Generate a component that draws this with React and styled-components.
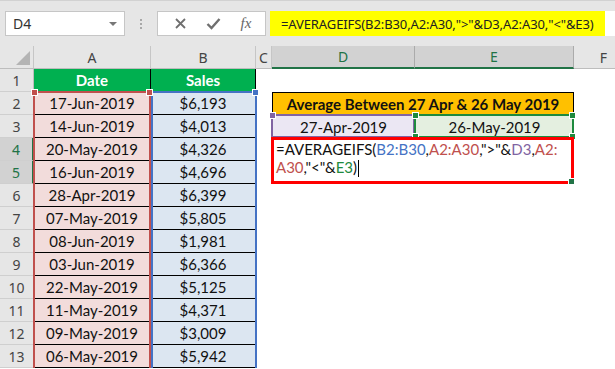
import React from 'react'
import styled, { createGlobalStyle } from 'styled-components'

const GlobalStyle = createGlobalStyle`
  html, body {
    margin: 0;
    padding: 0;
    background: #ffffff;
    overflow: hidden;
  }
`

const REF = {
  blue: '#4472c4',
  red: '#c0504d',
  purple: '#8064a2',
  green: '#1e8a3e',
}

const rows = [
  ['17-Jun-2019', '$6,193'],
  ['14-Jun-2019', '$4,013'],
  ['20-May-2019', '$4,326'],
  ['16-Jun-2019', '$4,696'],
  ['28-Apr-2019', '$6,399'],
  ['07-May-2019', '$5,805'],
  ['08-Jun-2019', '$1,981'],
  ['03-Jun-2019', '$6,366'],
  ['22-May-2019', '$5,125'],
  ['11-May-2019', '$4,371'],
  ['09-May-2019', '$3,009'],
  ['06-May-2019', '$5,942'],
]

const Page = styled.div`
  width: 615px;
  height: 369px;
  background: #fff;
  display: flex;
  flex-direction: column;
  overflow: hidden;
`

const Toolbar = styled.div`
  height: 46px;
  flex-shrink: 0;
  box-sizing: border-box;
  background: #e6e6e6;
  border-top: 1px solid #d2d2d2;
  display: flex;
  align-items: center;
  padding: 0 0 0 5px;
  font-family: 'Noto Sans', 'Open Sans', sans-serif;
`

const NameBox = styled.div`
  width: 120px;
  height: 25px;
  box-sizing: border-box;
  background: #fff;
  border: 1px solid #c6c6c6;
  display: flex;
  align-items: center;
  justify-content: space-between;
  padding: 0 7px 0 7px;
  font-size: 14px;
  color: #333;
`

const Caret = styled.span`
  width: 0;
  height: 0;
  border-left: 4px solid transparent;
  border-right: 4px solid transparent;
  border-top: 4px solid #777;
`

const Dots = styled.div`
  width: 32px;
  display: flex;
  flex-direction: column;
  align-items: center;
  gap: 2px;

  span {
    width: 2px;
    height: 2px;
    background: #a8a8a8;
  }
`

const FxButtons = styled.div`
  width: 109px;
  height: 25px;
  box-sizing: border-box;
  background: #fff;
  border: 1px solid #c6c6c6;
  display: flex;
  align-items: center;
  justify-content: space-around;
  padding: 0 4px 0 6px;
  color: #777;
`

const FxLabel = styled.span`
  font-family: 'Liberation Serif', serif;
  font-style: italic;
  font-size: 15px;
  color: #666;
`

const FormulaBox = styled.div`
  flex: 1;
  margin-left: 4px;
  height: 25px;
  box-sizing: border-box;
  background: #fff;
  display: flex;
  align-items: stretch;
`

const FormulaHighlight = styled.div`
  width: 335px;
  background: #ffff00;
  display: flex;
  align-items: center;
  padding-left: 11px;
  box-sizing: border-box;
  font-size: 13px;
  letter-spacing: -0.1px;
  color: #222;
  white-space: nowrap;
  overflow: hidden;
`

const Sheet = styled.div`
  position: relative;
  display: grid;
  grid-template-columns: 34px 117px 105px 16px 143px 159px 60px;
  grid-template-rows: repeat(14, 23px);
  font-family: Lato, 'Liberation Sans', sans-serif;
`

const ColHead = styled.div`
  background: ${p => (p.$sel ? '#d2d2d2' : '#e6e6e6')};
  color: ${p => (p.$sel ? '#217346' : '#444')};
  border-right: 1px solid ${p => (p.$sel ? '#ababab' : '#c6c6c6')};
  border-bottom: ${p => (p.$sel ? '2px solid #217346' : '1px solid #bdbdbd')};
  box-sizing: border-box;
  display: flex;
  align-items: center;
  justify-content: center;
  font-family: 'Noto Sans', 'Open Sans', sans-serif;
  font-size: 14px;
`

const Corner = styled(ColHead)`
  position: relative;
  &::after {
    content: '';
    position: absolute;
    right: 3px;
    bottom: 3px;
    width: 0;
    height: 0;
    border-left: 14px solid transparent;
    border-bottom: 14px solid #b4b4b4;
  }
`

const RowHead = styled.div`
  background: ${p => (p.$sel ? '#d2d2d2' : '#e6e6e6')};
  color: ${p => (p.$sel ? '#217346' : '#444')};
  border-bottom: 1px solid #cfcfcf;
  border-right: ${p => (p.$sel ? '2px solid #217346' : '1px solid #bdbdbd')};
  box-sizing: border-box;
  display: flex;
  align-items: center;
  justify-content: center;
  font-family: 'Noto Sans', 'Open Sans', sans-serif;
  font-size: 14px;
`

const Cell = styled.div`
  background: ${p => p.$bg || '#fff'};
  color: ${p => p.$color || '#111'};
  font-weight: ${p => (p.$bold ? 700 : 400)};
  border-right: ${p => (p.$lined ? '1px solid #000' : 'none')};
  border-bottom: ${p => (p.$lined ? '1px solid #000' : 'none')};
  border-left: ${p => (p.$boxed ? '1px solid #000' : 'none')};
  border-top: ${p => (p.$boxed ? '1px solid #000' : 'none')};
  box-sizing: border-box;
  display: flex;
  align-items: center;
  justify-content: center;
  font-size: 15px;
  white-space: nowrap;
  grid-column: ${p => p.$col || 'auto'};
`

const FormulaCell = styled.div`
  grid-column: 5 / 7;
  grid-row: 5 / 7;
  padding: 2px 0 0 4px;
  font-size: 15px;
  line-height: 18px;
  color: #111;
  white-space: nowrap;
`

const Ref = styled.span`
  color: ${p => p.$c};
`

const Cursor = styled.span`
  display: inline-block;
  width: 1px;
  height: 17px;
  background: #000;
  vertical-align: -4px;
  margin-left: 1px;
`

// overlays: reference boxes and their handles, placed by grid area
const RefBox = styled.div`
  position: absolute;
  inset: ${p => p.$inset || '0'};
  border: ${p => p.$w || 2}px solid ${p => p.$c};
  border-bottom-width: ${p => (p.$open ? 0 : p.$w || 2)}px;
  pointer-events: none;
  grid-column: ${p => p.$col};
  grid-row: ${p => p.$row};
`

const Handle = styled.span`
  position: absolute;
  width: 5px;
  height: 5px;
  background: ${p => p.$c};
  border: 1px solid #fff;
  ${p => (p.$left ? 'left: -4px;' : 'right: -4px;')}
  ${p => (p.$top ? 'top: -4px;' : 'bottom: -4px;')}
`

function XIcon() {
  return (
    <svg width="13" height="13" viewBox="0 0 13 13">
      <path d="M2 2 L11 11 M11 2 L2 11" stroke="#6f6f6f" strokeWidth="1.8" />
    </svg>
  )
}

function CheckIcon() {
  return (
    <svg width="15" height="13" viewBox="0 0 15 13">
      <path d="M1.5 7 L5.5 11 L13.5 2" stroke="#6f6f6f" strokeWidth="2.4" fill="none" />
    </svg>
  )
}

export default function App() {
  const cols = ['A', 'B', 'C', 'D', 'E', 'F']
  return (
    <Page>
      <GlobalStyle />
      <Toolbar>
        <NameBox>
          <span>D4</span>
          <Caret />
        </NameBox>
        <Dots><span /><span /><span /></Dots>
        <FxButtons>
          <XIcon />
          <CheckIcon />
          <FxLabel>fx</FxLabel>
        </FxButtons>
        <FormulaBox>
          <FormulaHighlight>=AVERAGEIFS(B2:B30,A2:A30,"&gt;"&amp;D3,A2:A30,"&lt;"&amp;E3)</FormulaHighlight>
        </FormulaBox>
      </Toolbar>

      <Sheet>
        <Corner />
        {cols.map(c => (
          <ColHead key={c} $sel={c === 'D' || c === 'E'}>{c}</ColHead>
        ))}

        {/* row 1 */}
        <RowHead>1</RowHead>
        <Cell $bg="#00b050" $color="#fff" $bold $lined>Date</Cell>
        <Cell $bg="#00b050" $color="#fff" $bold $lined>Sales</Cell>
        <Cell $col="4 / 8" />

        {rows.map(([date, sales], i) => {
          const r = i + 2
          return (
            <React.Fragment key={r}>
              <RowHead $sel={r === 4 || r === 5}>{r}</RowHead>
              <Cell $bg="#f2dcdb" $lined>{date}</Cell>
              <Cell $bg="#dce6f1" $lined>{sales}</Cell>
              {r === 2 && (
                <>
                  <Cell />
                  <Cell $col="5 / 7" $bg="#ffc000" $bold $lined $boxed>Average Between 27 Apr &amp; 26 May 2019</Cell>
                  <Cell />
                </>
              )}
              {r === 3 && (
                <>
                  <Cell />
                  <Cell $bg="#ebe7f3">27-Apr-2019</Cell>
                  <Cell $bg="#e4efe0">26-May-2019</Cell>
                  <Cell />
                </>
              )}
              {r === 4 && (
                <>
                  <Cell />
                  <FormulaCell>
                    =AVERAGEIFS(<Ref $c={REF.blue}>B2:B30</Ref>,<Ref $c={REF.red}>A2:A30</Ref>,"&gt;"&amp;<Ref $c={REF.purple}>D3</Ref>,<Ref $c={REF.red}>A2:</Ref>
                    <br />
                    <Ref $c={REF.red}>A30</Ref>,"&lt;"&amp;<Ref $c={REF.green}>E3</Ref>)<Cursor />
                  </FormulaCell>
                  <Cell />
                </>
              )}
              {r === 5 && <><Cell /><Cell /></>}
              {r > 5 && <Cell $col="4 / 8" />}
            </React.Fragment>
          )
        })}

        {/* reference highlights */}
        <RefBox $c={REF.blue} $col="3 / 4" $row="3 / 15" $inset="-1px -1px 0 0" $open>
          <Handle $c={REF.blue} $top />
        </RefBox>
        <RefBox $c={REF.red} $col="2 / 3" $row="3 / 15" $inset="-1px 0 0 -1px" $open>
          <Handle $c={REF.red} $left $top />
          <Handle $c={REF.red} $top />
        </RefBox>
        <RefBox $c={REF.purple} $col="5 / 6" $row="4 / 5" $inset="-1px 0 0 -1px">
          <Handle $c={REF.purple} $left $top />
        </RefBox>
        <RefBox $c={REF.green} $col="6 / 7" $row="4 / 5" $inset="-1px 0 0 -1px">
          <Handle $c={REF.green} $left $top />
          <Handle $c={REF.green} $top />
          <Handle $c={REF.green} $left />
          <Handle $c={REF.green} />
        </RefBox>
        <RefBox $c="#ff0000" $w={3} $col="5 / 7" $row="5 / 7" $inset="-1px 0 0 -1px">
          <Handle $c="#217346" />
        </RefBox>
      </Sheet>
    </Page>
  )
}
